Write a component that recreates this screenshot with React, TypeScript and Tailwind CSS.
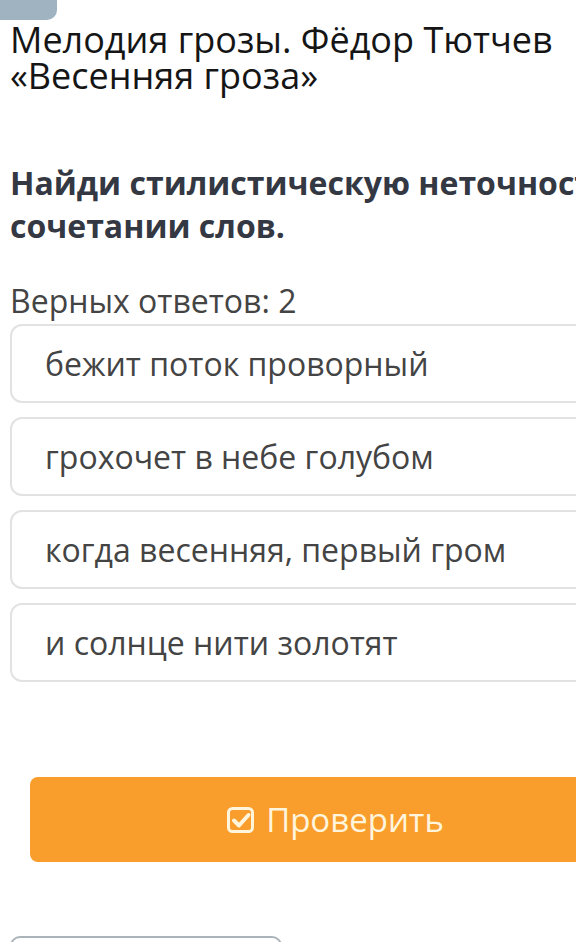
import React from "react";

const answers = [
  "бежит поток проворный",
  "грохочет в небе голубом",
  "когда весенняя, первый гром",
  "и солнце нити золотят",
];

function CheckIcon() {
  return (
    <svg width="30" height="30" viewBox="0 0 30 30" fill="none">
      <rect x="2.5" y="3.5" width="24" height="23" rx="4" stroke="#fff5dc" strokeWidth="3" />
      <path d="M8 15.5 L13 20.5 L22.5 10" stroke="#fff5dc" strokeWidth="4" strokeLinecap="round" strokeLinejoin="round" />
    </svg>
  );
}

export default function App() {
  return (
    <div className="w-[576px] h-[942px] overflow-hidden bg-white" style={{ fontFamily: '"Open Sans", "Noto Sans", sans-serif' }}>
      <div className="w-[660px]">
        <div className="h-[20px] w-[57px] bg-[#9fb3c1] rounded-br-[10px]" />
        <h1 className="mt-[2px] pl-[10px] text-[36px] leading-[36px] text-[#151515] font-normal whitespace-nowrap">
          Мелодия грозы. Фёдор Тютчев
          <br />
          «Весенняя гроза»
        </h1>
        <p className="mt-[67px] pl-[10px] text-[32px] leading-[43px] font-bold text-[#343843] whitespace-nowrap">
          Найди стилистическую неточность в
          <br />
          сочетании слов.
        </p>
        <p className="mt-[36px] pl-[10px] text-[32px] leading-[36px] text-[#444]">Верных ответов: 2</p>
        <div className="mt-[5px] ml-[10px] flex flex-col gap-[14px]">
          {answers.map((a) => (
            <div
              key={a}
              className="h-[79px] border-2 border-[#e2e2e2] rounded-[12px] flex items-center pl-[33px] text-[32px] text-[#444]"
            >
              {a}
            </div>
          ))}
        </div>
        <div className="mt-[95px] ml-[30px] h-[85px] w-[610px] bg-[#f99d2c] rounded-[8px] flex items-center justify-center gap-[10px] text-[#fff5dc] text-[33px]">
          <CheckIcon />
          <span>Проверить</span>
        </div>
        <div className="mt-[74px] ml-[10px] w-[272px] h-[20px] border-2 border-b-0 border-[#aab4ba] rounded-t-[10px]" />
      </div>
    </div>
  );
}
